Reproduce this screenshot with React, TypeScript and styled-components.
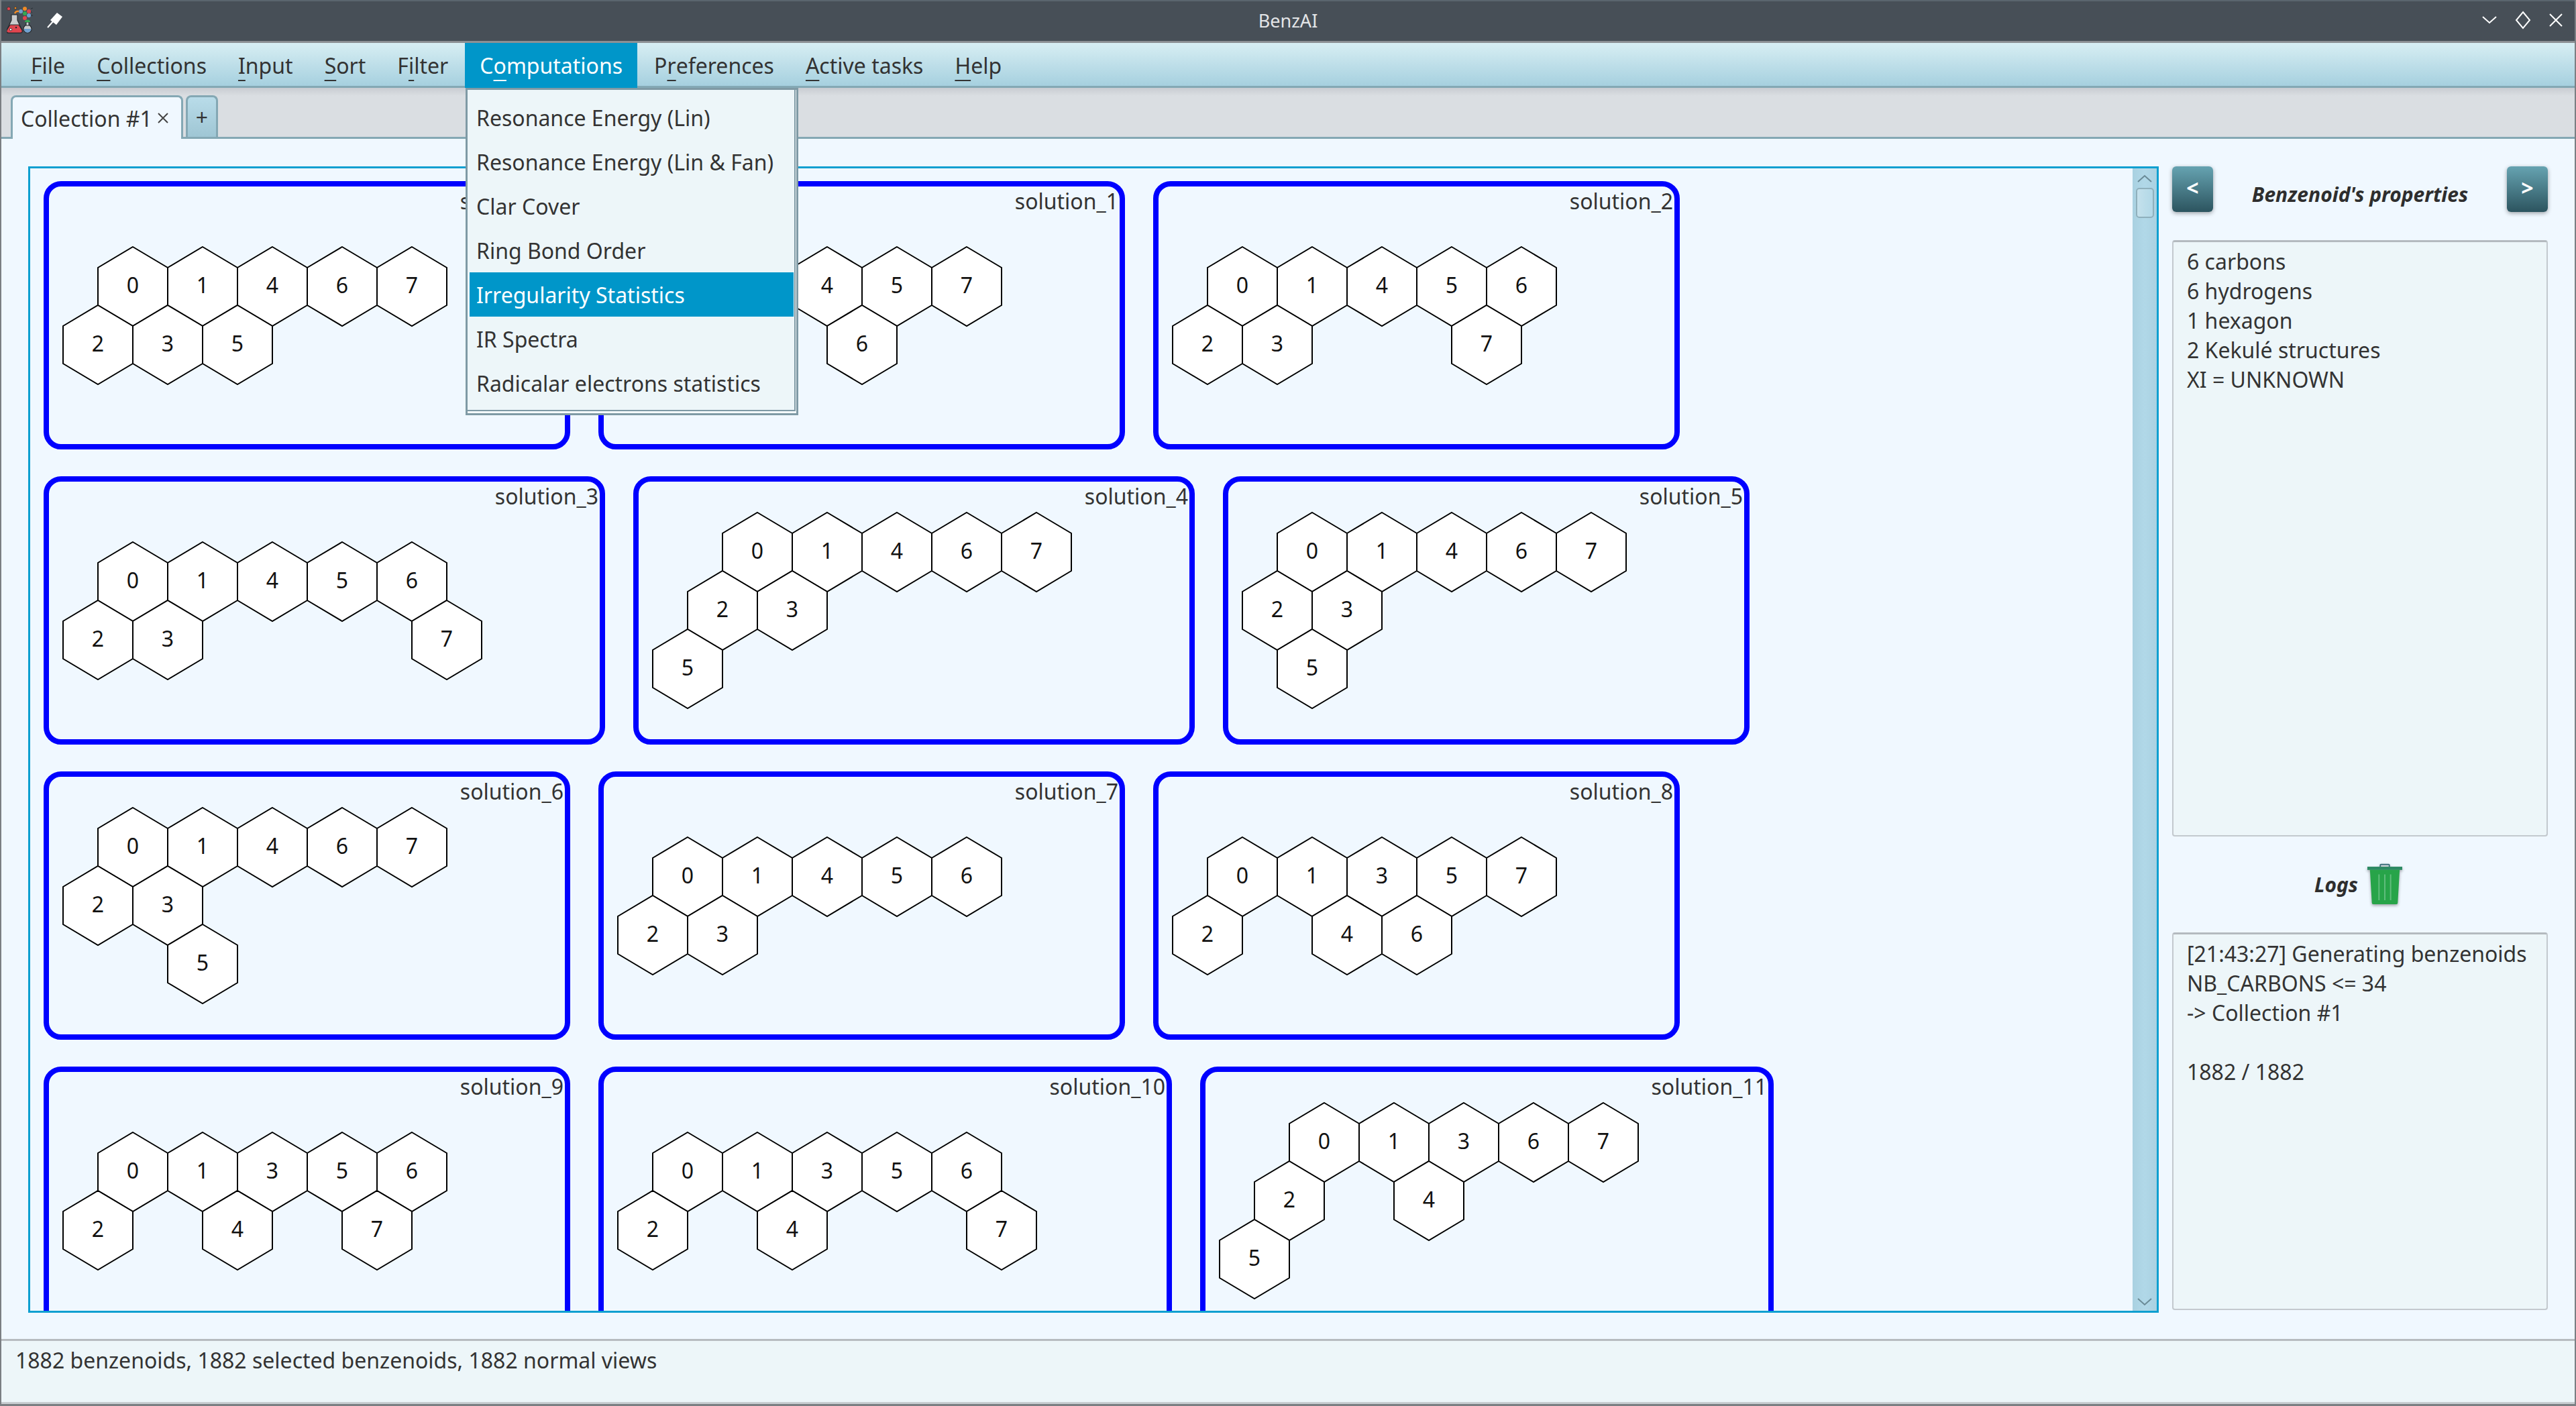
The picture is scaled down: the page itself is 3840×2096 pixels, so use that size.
import styled, { createGlobalStyle } from "styled-components";

const GlobalStyle = createGlobalStyle`
  html, body {
    margin: 0;
    padding: 0;
    background: #f0f8ff;
  }
  * {
    box-sizing: border-box;
  }
`;

const Window = styled.div`
  width: 3840px;
  height: 2096px;
  display: flex;
  flex-direction: column;
  position: relative;
  overflow: hidden;
  background: #f0f8ff;
  border-left: 2px solid #7b7f83;
  border-right: 2px solid #7b7f83;
  border-bottom: 3px solid #7b7f83;
  font-family: "Noto Sans", sans-serif;
  font-size: 32px;
  color: #333333;
`;

const TitleBar = styled.div`
  height: 64px;
  margin: 0 -2px;
  flex: none;
  display: flex;
  align-items: center;
  position: relative;
  padding: 0 0 3px 10px;
  background: #474f57;
  border-top: 2px solid #5a656e;
  border-bottom: 3px solid #8c9094;
`;

const TitleText = styled.div`
  position: absolute;
  left: 0;
  right: 0;
  text-align: center;
  font-size: 27px;
  color: #e3e5e7;
`;

const TitleLeft = styled.div`
  display: flex;
  align-items: center;
  gap: 20px;
`;

const TitleControls = styled.div`
  margin-left: auto;
  display: flex;
  align-items: center;
  gap: 26px;
  padding-right: 19px;
`;

const MenuBar = styled.div`
  height: 67px;
  flex: none;
  display: flex;
  gap: 3px;
  padding-left: 22px;
  background: linear-gradient(#d7eef3, #a6d0df);
  border-bottom: 3px solid #84a8b4;
`;

const MenuItem = styled.div<{ $open?: boolean }>`
  display: flex;
  align-items: center;
  padding: 0 22px;
  margin-bottom: -3px;
  white-space: pre;
  color: ${(p) => (p.$open ? "#ffffff" : "#333333")};
  background: ${(p) => (p.$open ? "#0096c9" : "transparent")};
`;

const Mnemonic = styled.span`
  text-decoration: underline;
  text-decoration-thickness: 2px;
  text-underline-offset: 9px;
  text-decoration-skip-ink: none;
`;

const Popup = styled.div`
  position: absolute;
  left: 692px;
  top: 131px;
  width: 496px;
  height: 488px;
  padding: 8px 4px 0 3px;
  display: flex;
  flex-direction: column;
  background: #edf6f9;
  border: 3px solid #7f9aa5;
  box-shadow: inset -1px -3px 0 #f4f9fb, inset -3px -5px 0 #7f9aa5;
  z-index: 5;
`;

const PopupItem = styled.div<{ $active?: boolean }>`
  height: 66px;
  flex: none;
  display: flex;
  align-items: center;
  padding-left: 10px;
  color: ${(p) => (p.$active ? "#ffffff" : "#333333")};
  background: ${(p) => (p.$active ? "#0096c9" : "transparent")};
`;

const TabBar = styled.div`
  height: 76px;
  flex: none;
  display: flex;
  align-items: flex-end;
  gap: 4px;
  padding-left: 14px;
  background: linear-gradient(#c9ccd2, #dadee2 12px);
  border-bottom: 3px solid #84a8b4;
`;

const Tab = styled.div`
  height: 65px;
  width: 257px;
  margin-bottom: -3px;
  display: flex;
  align-items: center;
  padding-left: 12px;
  gap: 8px;
  background: #f0f8ff;
  border: 3px solid #84a8b4;
  border-bottom: none;
  border-radius: 8px 8px 0 0;
`;

const AddTab = styled.div`
  height: 62px;
  width: 48px;
  display: flex;
  align-items: center;
  justify-content: center;
  background: linear-gradient(#b9dce9, #9fc6d4);
  border: 3px solid #84a8b4;
  border-bottom: none;
  border-radius: 8px 8px 0 0;
`;

const Content = styled.div`
  flex: 1;
  min-height: 0;
  display: flex;
  gap: 20px;
  padding: 41px 40px 39px 40px;
`;

const ScrollPane = styled.div`
  flex: 1;
  min-width: 0;
  display: flex;
  border: 3px solid #0e9fd0;
  background: #f0f8ff;
`;

const Viewport = styled.div`
  flex: 1;
  min-width: 0;
  overflow: hidden;
  display: flex;
  flex-wrap: wrap;
  align-content: flex-start;
  gap: 40px 42px;
  padding: 19px 0 0 20px;
`;

const Card = styled.div<{ $width: number }>`
  width: ${(p) => p.$width}px;
  height: 400px;
  flex: none;
  position: relative;
  display: flex;
  align-items: center;
  padding-left: 20px;
  border: 8px solid #0000ff;
  border-radius: 26px;
`;

const CardLabel = styled.div`
  position: absolute;
  top: 0;
  right: 2px;
  line-height: 44px;
`;

const ScrollBar = styled.div`
  width: 36px;
  flex: none;
  display: flex;
  flex-direction: column;
  align-items: center;
  padding-top: 8px;
  background: linear-gradient(90deg, #a9d1e1, #b1d8e8 50%, #a9d1e1);
`;

const ScrollThumb = styled.div`
  width: 27px;
  height: 45px;
  margin-top: 7px;
  background: linear-gradient(90deg, #c4e1ec, #b2d8e7);
  border: 2px solid #8fb0bc;
  border-radius: 5px;
`;

const ScrollEnd = styled.div`
  margin-top: auto;
  padding-bottom: 6px;
  display: flex;
`;

const SidePanel = styled.div`
  width: 560px;
  flex: none;
  display: flex;
  flex-direction: column;
`;

const PropsHeader = styled.div`
  height: 68px;
  flex: none;
  display: flex;
  align-items: center;
  justify-content: space-between;
  margin-bottom: 42px;
`;

const NavButton = styled.div`
  width: 61px;
  height: 68px;
  display: flex;
  align-items: center;
  justify-content: center;
  padding-bottom: 6px;
  color: #ffffff;
  font-weight: 700;
  background: linear-gradient(#66a3b1, #2c545f);
  border-radius: 6px;
  box-shadow: 0 2px 6px rgba(0, 0, 0, 0.35);
`;

const HeaderTitle = styled.div`
  font-weight: 700;
  font-style: italic;
  font-size: 30px;
  padding-top: 14px;
  color: #2e2e2e;
`;

const TextBox = styled.div<{ $height: number }>`
  height: ${(p) => p.$height}px;
  flex: none;
  padding: 7px 20px;
  line-height: 44px;
  white-space: pre;
  background: #edf6f9;
  border: 2px solid #c3c9ce;
  border-top: 3px solid #b4babf;
  border-radius: 4px;
`;

const LogsHeader = styled.div`
  height: 143px;
  flex: none;
  display: flex;
  align-items: center;
  justify-content: center;
  gap: 14px;
  padding-right: 5px;
`;

const LogsTitle = styled.div`
  font-weight: 700;
  font-style: italic;
  font-size: 30px;
  color: #2e2e2e;
`;

const StatusBar = styled.div`
  height: 97px;
  flex: none;
  padding: 7px 21px;
  line-height: 44px;
  background: #edf6f9;
  border-top: 3px solid #b7bcc0;
  border-bottom: 3px solid #c8cdd1;
`;

type Hex = [string, number, number];

const HEX_W = 104;
const ROW_H = 87;
const HEX_TIP = 31;
const HEX_SIDE = 28;

function hexPoints(cx: number, cy: number) {
  const h = HEX_W / 2;
  return [
    [cx, cy - HEX_SIDE - HEX_TIP],
    [cx + h, cy - HEX_SIDE],
    [cx + h, cy + HEX_SIDE],
    [cx, cy + HEX_SIDE + HEX_TIP],
    [cx - h, cy + HEX_SIDE],
    [cx - h, cy - HEX_SIDE],
  ]
    .map((p) => p.join(","))
    .join(" ");
}

const HexSvg = styled.svg`
  flex: none;
  display: block;
  text {
    font-family: "Noto Sans", sans-serif;
    font-size: 32px;
    fill: #111111;
    text-anchor: middle;
  }
`;

function Molecule({ hexes }: { hexes: Hex[] }) {
  const maxCol = Math.max(...hexes.map((h) => h[1]));
  const maxRow = Math.max(...hexes.map((h) => h[2]));
  const width = (maxCol + 2) * (HEX_W / 2) + 2;
  const height = maxRow * ROW_H + 2 * (HEX_SIDE + HEX_TIP) + 2;
  return (
    <HexSvg width={width} height={height} viewBox={`0 0 ${width} ${height}`}>
      {hexes.map(([label, col, row]) => {
        const cx = 53 + col * (HEX_W / 2);
        const cy = 60 + row * ROW_H;
        return (
          <g key={label}>
            <polygon points={hexPoints(cx, cy)} fill="#ffffff" stroke="#000000" strokeWidth="2" />
            <text x={cx} y={cy + 10}>
              {label}
            </text>
          </g>
        );
      })}
    </HexSvg>
  );
}

const solutions: Hex[][] = [
  [["0", 1, 0], ["1", 3, 0], ["4", 5, 0], ["6", 7, 0], ["7", 9, 0], ["2", 0, 1], ["3", 2, 1], ["5", 4, 1]],
  [["0", 1, 0], ["1", 3, 0], ["4", 5, 0], ["5", 7, 0], ["7", 9, 0], ["2", 0, 1], ["3", 2, 1], ["6", 6, 1]],
  [["0", 1, 0], ["1", 3, 0], ["4", 5, 0], ["5", 7, 0], ["6", 9, 0], ["2", 0, 1], ["3", 2, 1], ["7", 8, 1]],
  [["0", 1, 0], ["1", 3, 0], ["4", 5, 0], ["5", 7, 0], ["6", 9, 0], ["2", 0, 1], ["3", 2, 1], ["7", 10, 1]],
  [["0", 2, 0], ["1", 4, 0], ["4", 6, 0], ["6", 8, 0], ["7", 10, 0], ["2", 1, 1], ["3", 3, 1], ["5", 0, 2]],
  [["0", 1, 0], ["1", 3, 0], ["4", 5, 0], ["6", 7, 0], ["7", 9, 0], ["2", 0, 1], ["3", 2, 1], ["5", 1, 2]],
  [["0", 1, 0], ["1", 3, 0], ["4", 5, 0], ["6", 7, 0], ["7", 9, 0], ["2", 0, 1], ["3", 2, 1], ["5", 3, 2]],
  [["0", 1, 0], ["1", 3, 0], ["4", 5, 0], ["5", 7, 0], ["6", 9, 0], ["2", 0, 1], ["3", 2, 1]],
  [["0", 1, 0], ["1", 3, 0], ["3", 5, 0], ["5", 7, 0], ["7", 9, 0], ["2", 0, 1], ["4", 4, 1], ["6", 6, 1]],
  [["0", 1, 0], ["1", 3, 0], ["3", 5, 0], ["5", 7, 0], ["6", 9, 0], ["2", 0, 1], ["4", 4, 1], ["7", 8, 1]],
  [["0", 1, 0], ["1", 3, 0], ["3", 5, 0], ["5", 7, 0], ["6", 9, 0], ["2", 0, 1], ["4", 4, 1], ["7", 10, 1]],
  [["0", 2, 0], ["1", 4, 0], ["3", 6, 0], ["6", 8, 0], ["7", 10, 0], ["2", 1, 1], ["4", 5, 1], ["5", 0, 2]],
];

function cardWidth(hexes: Hex[], index: number) {
  const maxCol = Math.max(...hexes.map((h) => h[1]));
  return 785 + (Math.max(maxCol, 9) - 9) * 52 + (index >= 10 ? 18 : 0);
}

const menus: [string, string, string, boolean?][] = [
  ["", "F", "ile"],
  ["", "C", "ollections"],
  ["", "I", "nput"],
  ["", "S", "ort"],
  ["F", "i", "lter"],
  ["C", "o", "mputations", true],
  ["P", "r", "eferences"],
  ["", "A", "ctive tasks"],
  ["", "H", "elp"],
];

const computations = [
  "Resonance Energy (Lin)",
  "Resonance Energy (Lin & Fan)",
  "Clar Cover",
  "Ring Bond Order",
  "Irregularity Statistics",
  "IR Spectra",
  "Radicalar electrons statistics",
];

function AppLogo() {
  const ink = "#23282c";
  return (
    <svg width="40" height="40" viewBox="0 0 40 40">
      <path d="M7 12h9v8l7 15q1 4-3 4H3q-4 0-3-4l7-15z" fill="#c9ccce" stroke={ink} strokeWidth="1.2" />
      <path d="M5 27h13l5 8q1 4-3 4H3q-4 0-3-4z" fill="#e0454f" stroke={ink} strokeWidth="1.2" />
      <circle cx="6" cy="34" r="1.8" fill="#ffffff" stroke={ink} strokeWidth="0.8" />
      <circle cx="14" cy="31" r="1.2" fill={ink} />
      <circle cx="31" cy="33" r="6" fill="#c9ccce" stroke={ink} strokeWidth="1.2" />
      <path d="M25.500 33h11a5.500 5.500 0 0 1-11 0z" fill="#6fa0d0" />
      <path d="M29 23h4v5h-4z" fill="#c9ccce" stroke={ink} strokeWidth="1" />
      <circle cx="3" cy="3" r="2.6" fill="#e0454f" stroke={ink} strokeWidth="0.6" />
      <circle cx="13" cy="2" r="1.8" fill="#f08a24" stroke={ink} strokeWidth="0.6" />
      <circle cx="21" cy="7" r="3" fill="#6fa0d0" />
      <circle cx="27" cy="3" r="3" fill="#f08a24" />
      <circle cx="33" cy="7" r="3" fill="#e0454f" />
      <circle cx="27" cy="10" r="3" fill="#35a853" />
      <circle cx="33" cy="13" r="3" fill="#6fa0d0" />
      <circle cx="27" cy="17" r="3" fill="#e0454f" />
      <path d="M27 23a4 3.500 0 0 1 8 0z" fill="#35a853" />
      <path d="M36 3l3-1M36 13h3M36 7l2 2" stroke={ink} strokeWidth="0.8" />
      <path d="M12 10q2-4 6-3" fill="none" stroke="#f08a24" strokeWidth="2.500" />
    </svg>
  );
}

function PinIcon() {
  return (
    <svg width="24" height="24" viewBox="0 0 24 24" fill="#ffffff">
      <path d="M15 1l8 6-9 12-9-7z" />
      <path d="M9 14L1 23" stroke="#ffffff" strokeWidth="2" />
    </svg>
  );
}

function TrashIcon() {
  return (
    <svg width="52" height="64" viewBox="0 0 54 66" style={{ filter: "drop-shadow(0 2px 2px rgba(0,0,0,.35))" }}>
      <path d="M20 5V2.500q0-1 1-1h12q1 0 1 1V5" fill="none" stroke="#3c6f7c" strokeWidth="2" />
      <rect x="0" y="5" width="54" height="5" fill="#2c8a63" />
      <path d="M4 10h46l-3 51q0 2-2 2H9q-2 0-2-2z" fill="#27a449" />
      <path d="M18 17v40M27 17v40M36 17v40" stroke="#62bd7e" strokeWidth="2" />
    </svg>
  );
}

function Chevron({ up, color }: { up?: boolean; color: string }) {
  return (
    <svg width="24" height="14" viewBox="0 0 24 14" fill="none" stroke={color} strokeWidth="2">
      <path d={up ? "M2 12L12 3l10 9" : "M2 2l10 9 10-9"} />
    </svg>
  );
}

export default function App() {
  return (
    <>
      <GlobalStyle />
      <Window>
        <TitleBar>
          <TitleText>BenzAI</TitleText>
          <TitleLeft>
            <AppLogo />
            <PinIcon />
          </TitleLeft>
          <TitleControls>
            <Chevron color="#ffffff" />
            <svg width="24" height="28" viewBox="0 0 24 28" fill="none" stroke="#ffffff" strokeWidth="2">
              <path d="M12 2l10 12-10 12L2 14z" />
            </svg>
            <svg width="22" height="22" viewBox="0 0 22 22" fill="none" stroke="#ffffff" strokeWidth="2">
              <path d="M2 2l18 18M20 2L2 20" />
            </svg>
          </TitleControls>
        </TitleBar>
        <MenuBar>
          {menus.map(([before, key, after, open]) => (
            <MenuItem key={before + key + after} $open={open}>
              {before}
              <Mnemonic>{key}</Mnemonic>
              {after}
            </MenuItem>
          ))}
        </MenuBar>
        <Popup>
          {computations.map((name) => (
            <PopupItem key={name} $active={name === "Irregularity Statistics"}>
              {name}
            </PopupItem>
          ))}
        </Popup>
        <TabBar>
          <Tab>
            Collection #1
            <svg width="16" height="16" viewBox="0 0 16 16" fill="none" stroke="#454545" strokeWidth="2">
              <path d="M1 1l14 14M15 1L1 15" />
            </svg>
          </Tab>
          <AddTab>+</AddTab>
        </TabBar>
        <Content>
          <ScrollPane>
            <Viewport>
              {solutions.map((hexes, i) => (
                <Card key={i} $width={cardWidth(hexes, i)}>
                  <CardLabel>solution_{i}</CardLabel>
                  <Molecule hexes={hexes} />
                </Card>
              ))}
            </Viewport>
            <ScrollBar>
              <Chevron up color="#6a8a96" />
              <ScrollThumb />
              <ScrollEnd>
                <Chevron color="#6a8a96" />
              </ScrollEnd>
            </ScrollBar>
          </ScrollPane>
          <SidePanel>
            <PropsHeader>
              <NavButton>&lt;</NavButton>
              <HeaderTitle>Benzenoid's properties</HeaderTitle>
              <NavButton>&gt;</NavButton>
            </PropsHeader>
            <TextBox $height={889}>
              {"6 carbons\n6 hydrogens\n1 hexagon\n2 Kekulé structures\nXI = UNKNOWN"}
            </TextBox>
            <LogsHeader>
              <LogsTitle>Logs</LogsTitle>
              <TrashIcon />
            </LogsHeader>
            <TextBox $height={563}>
              {"[21:43:27] Generating benzenoids\nNB_CARBONS <= 34\n-> Collection #1\n\n1882 / 1882"}
            </TextBox>
          </SidePanel>
        </Content>
        <StatusBar>1882 benzenoids, 1882 selected benzenoids, 1882 normal views</StatusBar>
      </Window>
    </>
  );
}
